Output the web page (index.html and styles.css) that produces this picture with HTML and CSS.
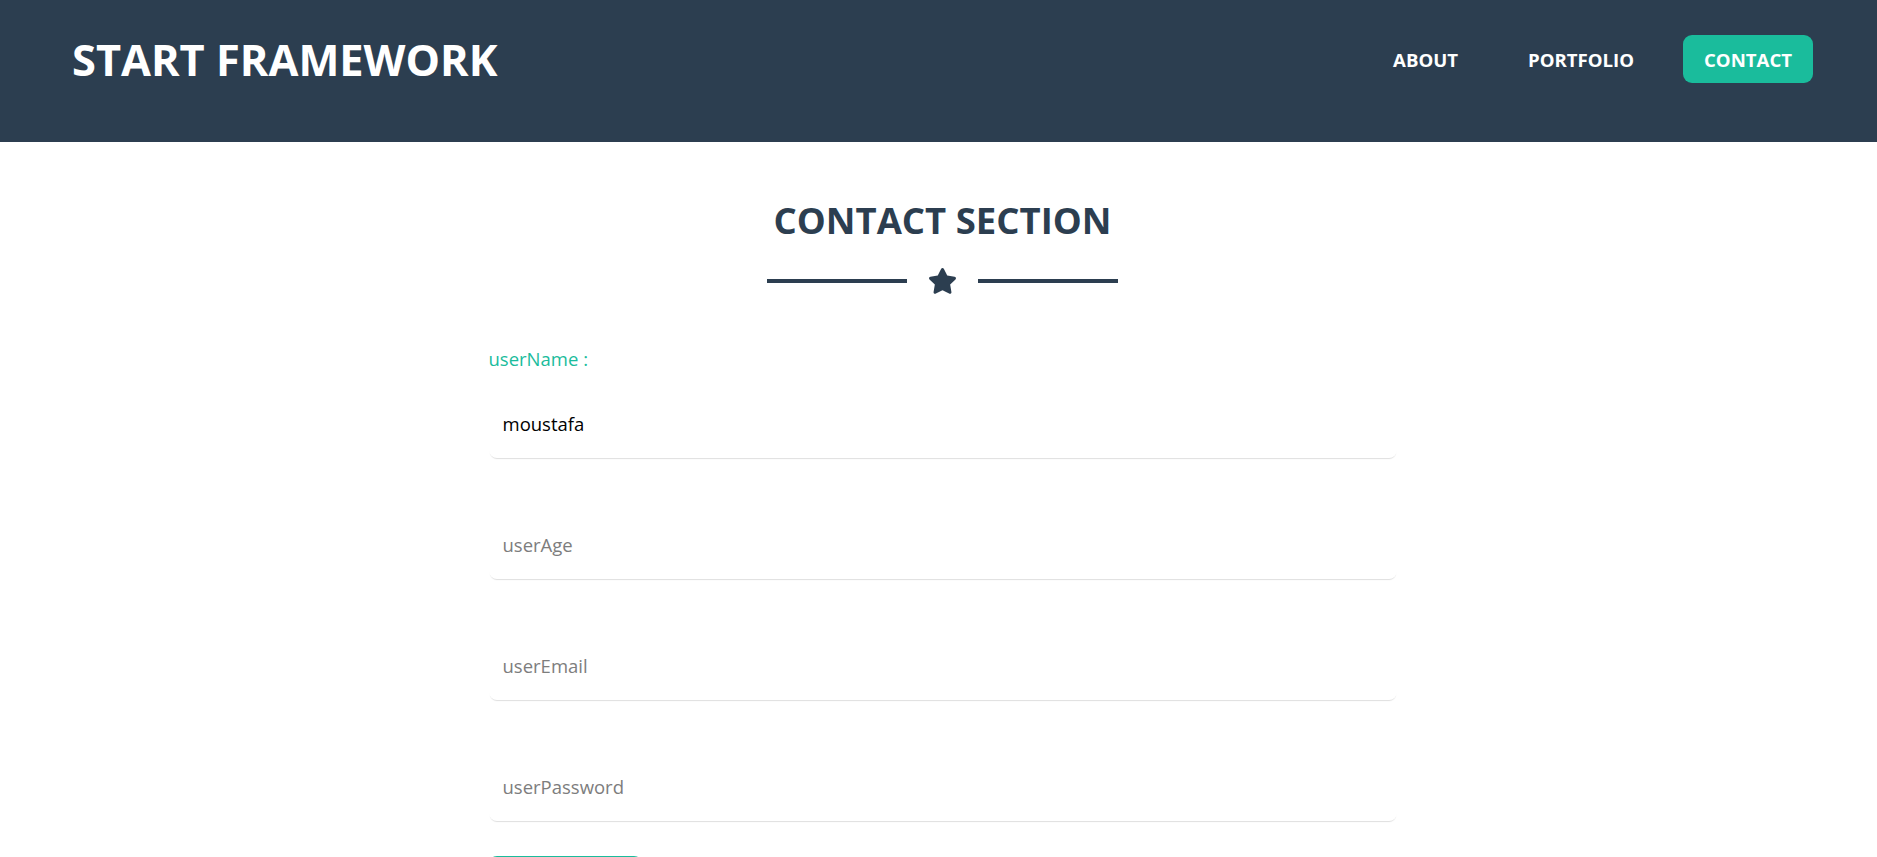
FILE: index.html
```html
<!DOCTYPE html>
<html lang="en">
<head>
<meta charset="utf-8">
<title>Start Framework</title>
<link rel="stylesheet" href="styles.css">
</head>
<body>
<header class="topbar">
  <div class="brand">START FRAMEWORK</div>
  <nav class="nav">
    <a class="nav-link" href="#">ABOUT</a>
    <a class="nav-link" href="#">PORTFOLIO</a>
    <a class="nav-link active" href="#">CONTACT</a>
  </nav>
</header>
<main class="main">
  <h2 class="section-title">CONTACT SECTION</h2>
  <div class="divider">
    <span class="divider-line"></span>
    <svg class="divider-star" viewBox="20 4 536 508" aria-hidden="true"><path d="M259.3 17.8L194 150.2 47.9 171.5c-26.2 3.8-36.7 36.1-17.7 54.6l105.7 103-25 145.5c-4.5 26.3 23.2 46 46.4 33.7L288 439.6l130.7 68.7c23.2 12.2 50.9-7.4 46.4-33.7l-25-145.5 105.7-103c19-18.5 8.5-50.8-17.7-54.6L382 150.2 316.7 17.8c-11.7-23.6-45.6-23.9-57.4 0z"/></svg>
    <span class="divider-line"></span>
  </div>
  <form class="form">
    <label class="field-label" for="userName">userName :</label>
    <input class="field" id="userName" type="text" value="moustafa">
    <input class="field" type="text" placeholder="userAge">
    <input class="field" type="text" placeholder="userEmail">
    <input class="field" type="password" placeholder="userPassword">
    <button class="submit" type="button" aria-label="Add User"></button>
  </form>
</main>
</body>
</html>
```

FILE: styles.css
```css
* { box-sizing: border-box; }

body {
  margin: 0;
  background: #ffffff;
  font-family: "Open Sans", "Noto Sans", sans-serif;
  color: #2c3e50;
}

.topbar {
  height: 142px;
  background: #2c3e50;
  display: flex;
  align-items: flex-start;
  justify-content: space-between;
  padding: 35px 64px 0 72px;
}

.brand {
  height: 48px;
  display: flex;
  align-items: center;
  color: #ffffff;
  font-weight: 700;
  font-size: 43.4px;
}

.nav {
  display: flex;
  align-items: center;
  gap: 28px;
  height: 48px;
}

.nav-link {
  display: flex;
  align-items: center;
  height: 48px;
  padding: 0 21px;
  color: #ffffff;
  text-decoration: none;
  font-weight: 700;
  font-size: 18.6px;
  border-radius: 9px;
}

.nav-link.active {
  background: #1abc9c;
}

.main {
  padding: 53px 0 0 8px;
}

.section-title {
  margin: 0;
  text-align: center;
  font-size: 36.5px;
  line-height: 51px;
  font-weight: 700;
  color: #2c3e50;
}

.divider {
  margin-top: 22px;
  height: 26px;
  display: flex;
  align-items: center;
  justify-content: center;
  gap: 22px;
}

.divider-line {
  width: 140px;
  height: 4px;
  background: #2c3e50;
}

.divider-star {
  width: 27px;
  height: 26px;
  fill: #2c3e50;
}

.form {
  width: 908px;
  margin: 50px auto 0;
  display: flex;
  flex-direction: column;
  align-items: stretch;
}

.field-label {
  color: #1abc9c;
  font-size: 18.5px;
  line-height: 30px;
  margin-bottom: 14px;
}

.field {
  font-family: "Open Sans", "Noto Sans", sans-serif;
  font-size: 18.5px;
  line-height: 30px;
  height: 70px;
  padding: 20px 14px;
  border: none;
  outline: none;
  border-radius: 8px;
  background: #ffffff;
  color: #000000;
  box-shadow: 0 2px 1px -1px rgba(0, 0, 0, 0.13);
  margin-bottom: 51px;
}

.field::placeholder {
  color: #7d7d7d;
}

.field:last-of-type {
  margin-bottom: 35px;
}

.submit {
  align-self: flex-start;
  width: 153px;
  height: 48px;
  border: none;
  border-radius: 8px;
  background: #1abc9c;
}
```
